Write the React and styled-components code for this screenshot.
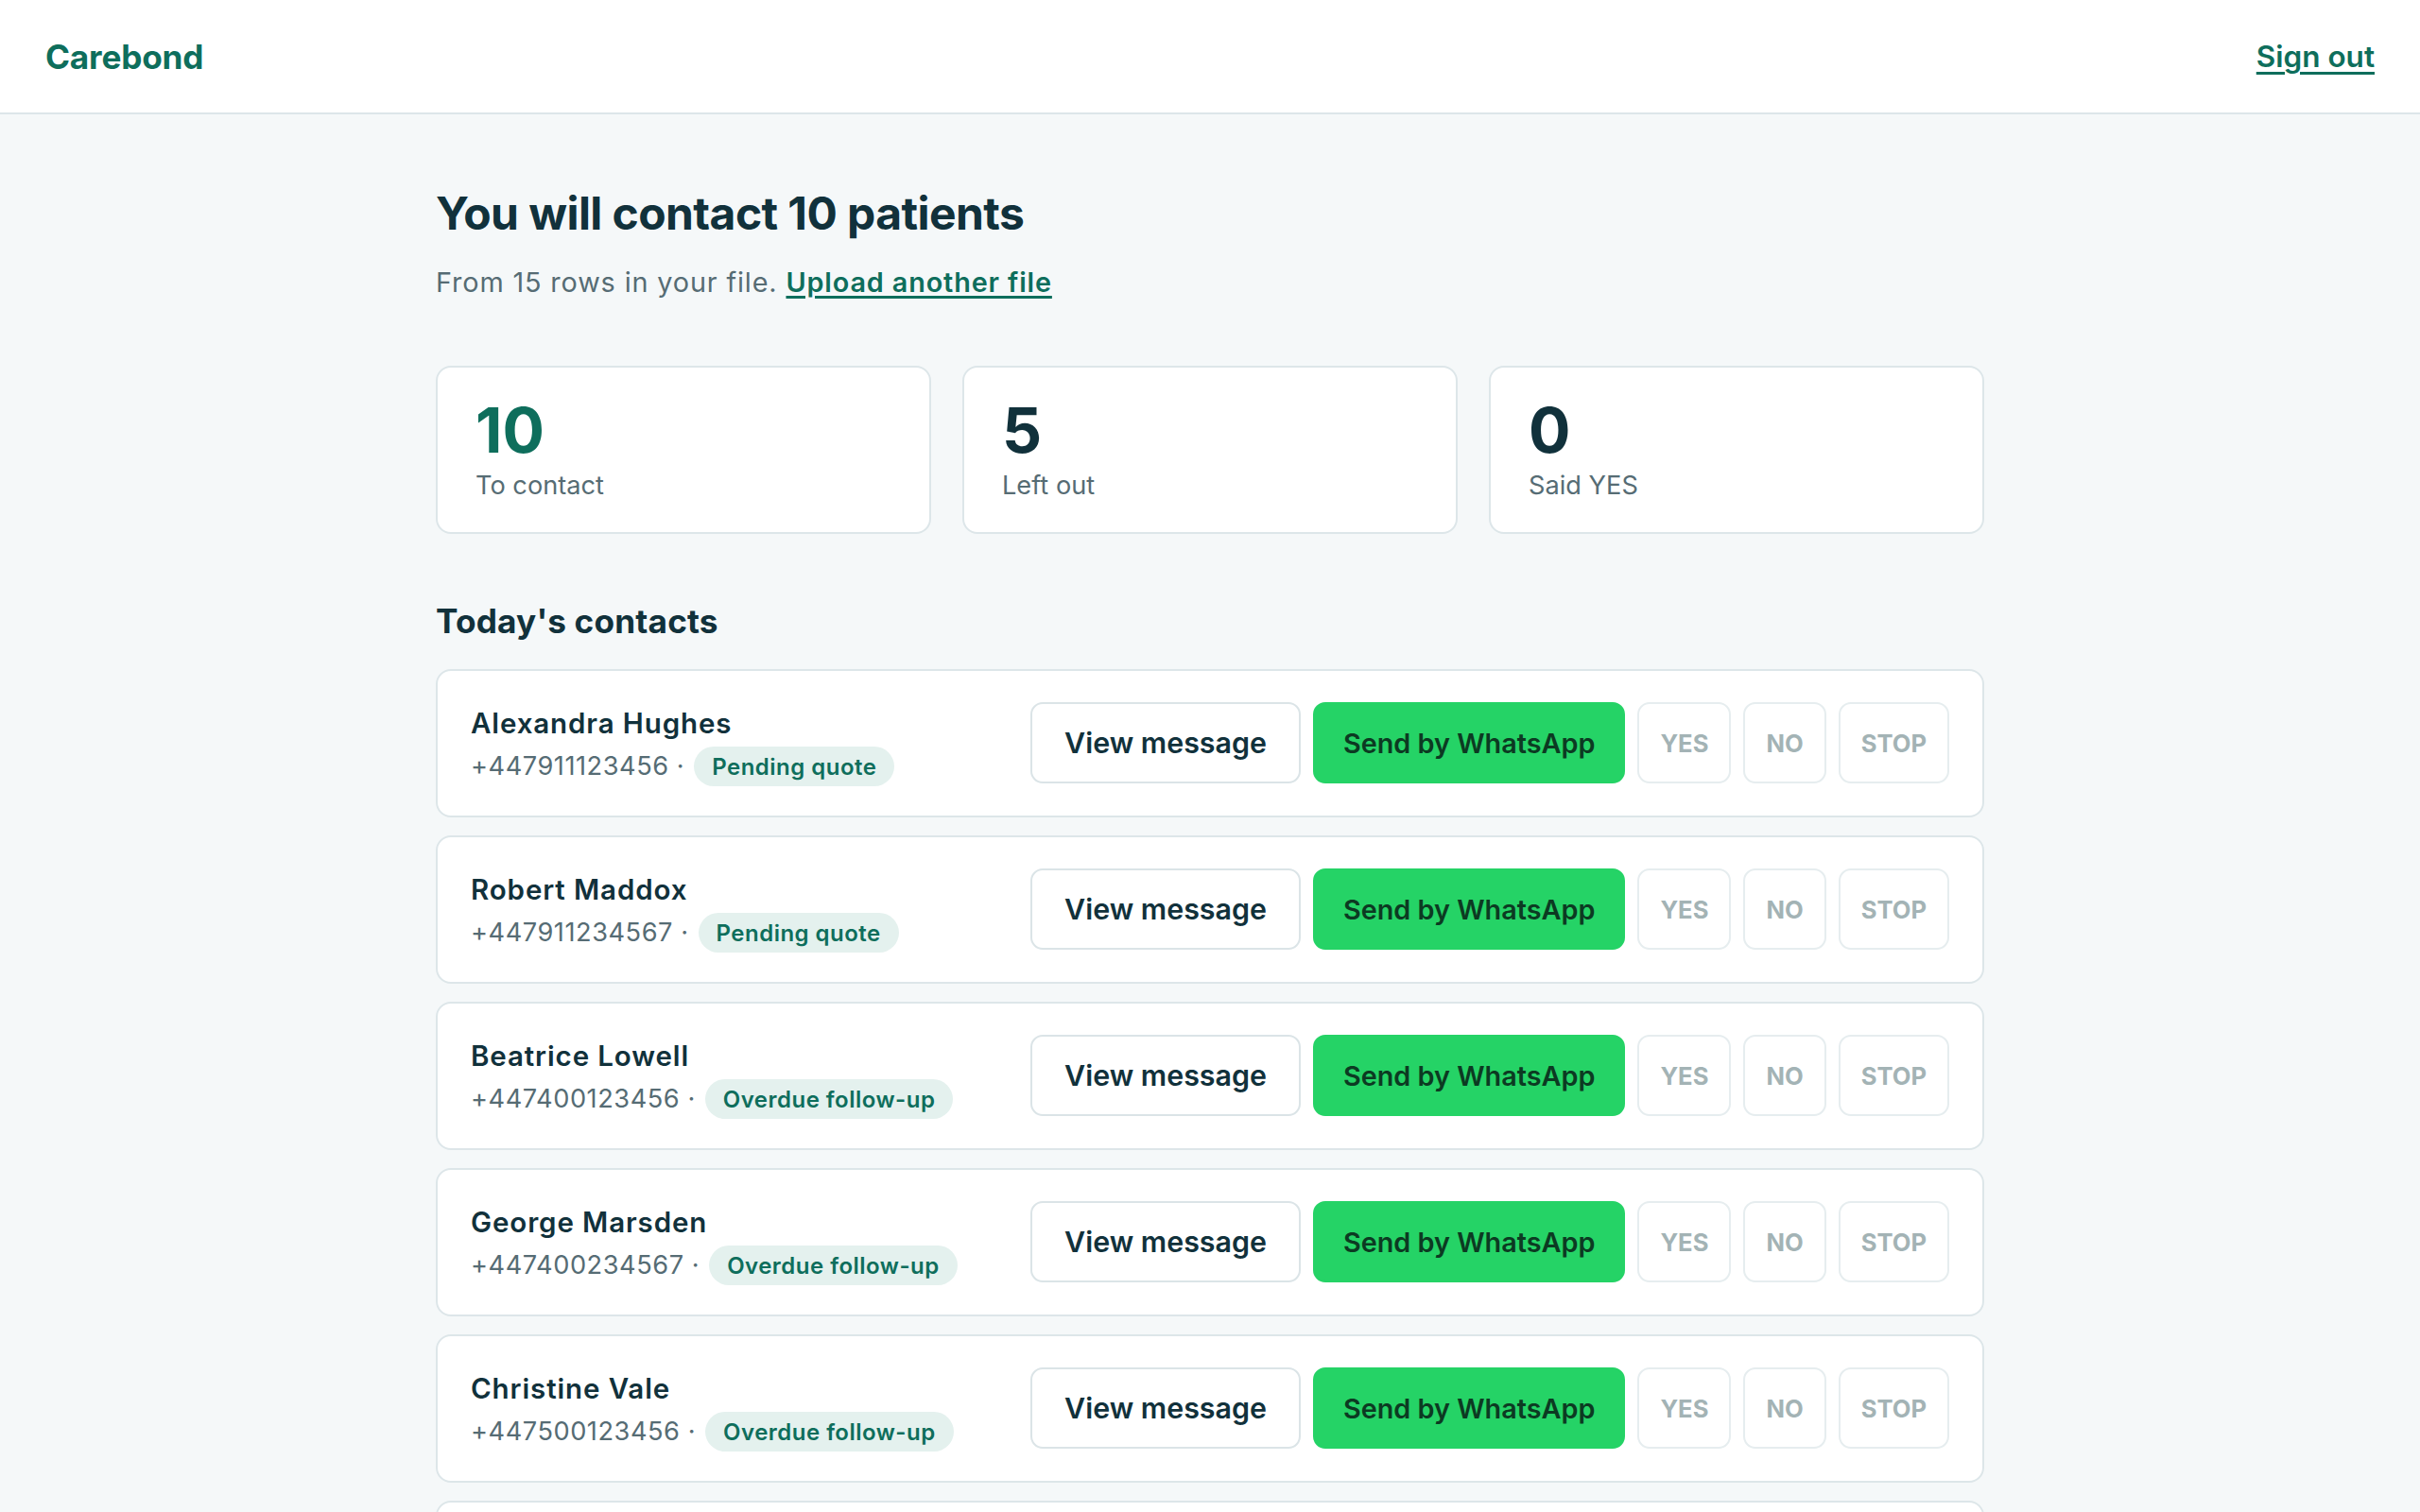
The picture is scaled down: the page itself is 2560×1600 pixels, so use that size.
import styled, { createGlobalStyle } from "styled-components";

const GlobalStyle = createGlobalStyle`
  * {
    box-sizing: border-box;
  }
  body {
    margin: 0;
    background-color: #f5f8f9;
    font-family: Inter, "Noto Sans", "Liberation Sans", sans-serif;
    color: #11313b;
  }
`;

const contacts = [
  { name: "Alexandra Hughes", phone: "+447911123456", tag: "Pending quote" },
  { name: "Robert Maddox", phone: "+447911234567", tag: "Pending quote" },
  { name: "Beatrice Lowell", phone: "+447400123456", tag: "Overdue follow-up" },
  { name: "George Marsden", phone: "+447400234567", tag: "Overdue follow-up" },
  { name: "Christine Vale", phone: "+447500123456", tag: "Overdue follow-up" },
  { name: "Harriet Osborne", phone: "+447500234567", tag: "Overdue follow-up" },
  { name: "Thomas Whitfield", phone: "+447700123456", tag: "Recall due" },
  { name: "Margaret Ellis", phone: "+447700234567", tag: "Recall due" },
  { name: "Daniel Carver", phone: "+447800123456", tag: "Recall due" },
  { name: "Sophie Brennan", phone: "+447800234567", tag: "Recall due" },
];

const stats = [
  { value: 10, label: "To contact", accent: true },
  { value: 5, label: "Left out" },
  { value: 0, label: "Said YES" },
];

export default function App() {
  return (
    <>
      <GlobalStyle />
      <Header>
        <Logo>Carebond</Logo>
        <SignOut href="#">Sign out</SignOut>
      </Header>

      <Main>
        <Title>You will contact 10 patients</Title>
        <Subtitle>
          From 15 rows in your file. <TextLink href="#">Upload another file</TextLink>
        </Subtitle>

        <StatGrid>
          {stats.map((s) => (
            <StatCard key={s.label}>
              <StatValue $accent={s.accent}>{s.value}</StatValue>
              <StatLabel>{s.label}</StatLabel>
            </StatCard>
          ))}
        </StatGrid>

        <SectionTitle>Today's contacts</SectionTitle>

        <List>
          {contacts.map((c) => (
            <Row key={c.phone}>
              <Info>
                <Name>{c.name}</Name>
                <Meta>
                  <Phone>{c.phone} ·</Phone>
                  <Badge>{c.tag}</Badge>
                </Meta>
              </Info>

              <Actions>
                <Button>View message</Button>
                <Button $primary>Send by WhatsApp</Button>
                <ReplyButton disabled>YES</ReplyButton>
                <ReplyButton disabled>NO</ReplyButton>
                <ReplyButton disabled>STOP</ReplyButton>
              </Actions>
            </Row>
          ))}
        </List>
      </Main>
    </>
  );
}

const Header = styled.header`
  height: 121px;
  background-color: #ffffff;
  border-bottom: 2px solid #dde6e9;
  display: flex;
  align-items: center;
  justify-content: space-between;
  padding: 0 48px;
`;

const Logo = styled.div`
  font-size: 35.2px;
  font-weight: 700;
  color: #0e6e5c;
  letter-spacing: -0.005em;
`;

const SignOut = styled.a`
  font-size: 31.5px;
  font-weight: 600;
  color: #0e6e5c;
  text-decoration: underline;
  text-underline-offset: 5px;
  text-decoration-thickness: 3px;
`;

const Main = styled.main`
  width: 1638px;
  margin: 0 auto;
  padding-top: 76px;
  padding-bottom: 80px;
`;

const Title = styled.h1`
  margin: 0 0 22px;
  font-size: 48px;
  line-height: 1.2;
  font-weight: 700;
  letter-spacing: -0.012em;
  color: #11313b;
`;

const Subtitle = styled.p`
  margin: 0;
  font-size: 28.8px;
  line-height: 1.5;
  letter-spacing: 0.03em;
  color: #566c74;
`;

const TextLink = styled.a`
  color: #0e6e5c;
  font-weight: 600;
  text-decoration: underline;
  text-underline-offset: 4px;
  text-decoration-thickness: 3px;
`;

const StatGrid = styled.div`
  display: grid;
  grid-template-columns: repeat(3, 1fr);
  gap: 33px;
  margin-top: 67px;
`;

const StatCard = styled.div`
  background-color: #ffffff;
  border: 2px solid #dde6e9;
  border-radius: 16px;
  padding: 33px 40px 30px;
`;

const StatValue = styled.div`
  font-size: 66px;
  line-height: 1;
  font-weight: 700;
  color: ${(p) => (p.$accent ? "#0e6e5c" : "#11313b")};
`;

const StatLabel = styled.div`
  margin-top: 7px;
  font-size: 27.2px;
  line-height: 1.4;
  color: #566c74;
`;

const SectionTitle = styled.h2`
  margin: 70px 0 27px;
  font-size: 35.2px;
  line-height: 1.3;
  font-weight: 700;
  letter-spacing: 0.005em;
  color: #11313b;
`;

const List = styled.div`
  display: flex;
  flex-direction: column;
  gap: 19px;
`;

const Row = styled.div`
  height: 157px;
  background-color: #ffffff;
  border: 2px solid #dde6e9;
  border-radius: 16px;
  padding: 0 35px;
  display: flex;
  align-items: center;
  justify-content: space-between;
`;

const Info = styled.div`
  display: flex;
  flex-direction: column;
  gap: 6px;
  padding-top: 6px;
`;

const Name = styled.div`
  font-size: 29.5px;
  line-height: 1.3;
  font-weight: 600;
  letter-spacing: 0.03em;
  color: #11313b;
`;

const Meta = styled.div`
  display: flex;
  align-items: center;
  gap: 10px;
`;

const Phone = styled.span`
  font-size: 27.2px;
  line-height: 1.4;
  letter-spacing: 0.02em;
  color: #566c74;
`;

const Badge = styled.span`
  display: inline-flex;
  align-items: center;
  height: 42px;
  padding: 0 19px;
  border-radius: 999px;
  background-color: #e4f1ee;
  color: #0e6e5c;
  font-size: 24px;
  font-weight: 600;
  letter-spacing: 0.02em;
`;

const Actions = styled.div`
  display: flex;
  align-items: center;
  gap: 13px;
`;

const Button = styled.button`
  height: 86px;
  padding: 0 ${(p) => (p.$primary ? "30px" : "34px")};
  border-radius: 13px;
  border: 2px solid ${(p) => (p.$primary ? "#25d366" : "#dbe4e7")};
  background-color: ${(p) => (p.$primary ? "#25d366" : "#ffffff")};
  color: ${(p) => (p.$primary ? "#0c3a22" : "#11313b")};
  font-family: inherit;
  font-size: ${(p) => (p.$primary ? "28.8px" : "30.4px")};
  font-weight: 600;
  cursor: pointer;
`;

const ReplyButton = styled.button`
  height: 86px;
  padding: 0 22px;
  border-radius: 13px;
  border: 2px solid #e6edef;
  background-color: #ffffff;
  color: #a3b3b5;
  font-family: inherit;
  font-size: 25.6px;
  font-weight: 700;
`;
